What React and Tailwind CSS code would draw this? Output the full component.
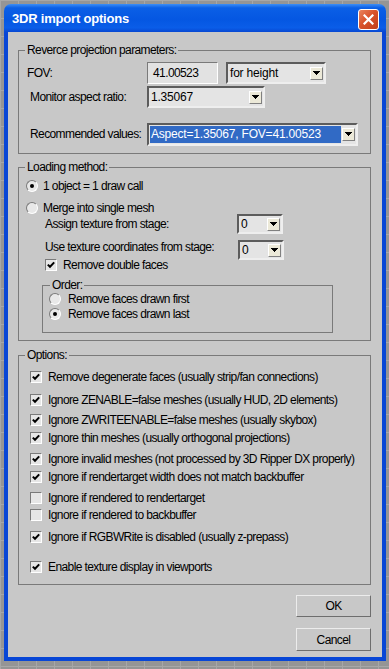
import React from 'react';

const lbl = "font-['Liberation_Sans',sans-serif] text-[12px] tracking-[-0.6px] leading-[14px] text-black whitespace-nowrap";

function Arrow() {
  return (
    <div className="w-[13px] h-[13px] shrink-0 flex items-center justify-center bg-[#ece9d8] border border-t-white border-l-white border-b-[#808080] border-r-[#808080]">
      <svg width="7" height="4" viewBox="0 0 7 4" shapeRendering="crispEdges">
        <path d="M0 0h7v1h-1v1h-1v1h-1v1h-1v-1h-1v-1h-1v-1h-1z" fill="#000" />
      </svg>
    </div>
  );
}

function Combo({ box, value, selected }) {
  return (
    <div className={`${box} shrink-0 flex items-center bg-[#e4e4e4] border-2 border-t-[#5c5c5c] border-l-[#5c5c5c] border-b-[#eeeeee] border-r-[#eeeeee] pr-[1px]`}>
      <div className={`flex-1 self-stretch m-[1px] mr-[1px] flex items-center pl-[1px] ${selected ? 'bg-[#316ac5] text-white' : 'text-black'}`}>
        <span className="font-['Liberation_Sans',sans-serif] text-[12px] tracking-[-0.2px] leading-none whitespace-nowrap">{value}</span>
      </div>
      <Arrow />
    </div>
  );
}

function Check({ checked }) {
  return (
    <div className="w-[12px] h-[12px] shrink-0 flex items-center justify-center bg-[#e6e6e6] border border-t-[#7a7a7a] border-l-[#7a7a7a] border-b-white border-r-white">
      {checked && (
        <svg width="8" height="8" viewBox="0 0 8 8">
          <path d="M0.8 3.6 L3 5.8 L7.2 1.4" stroke="#000" strokeWidth="2" fill="none" />
        </svg>
      )}
    </div>
  );
}

function Radio({ checked }) {
  return (
    <div className="w-[12px] h-[12px] shrink-0 rounded-full flex items-center justify-center bg-[#e8e8e8] border border-t-[#7a7a7a] border-l-[#7a7a7a] border-b-white border-r-white">
      {checked && <div className="w-[4px] h-[4px] rounded-full bg-black" />}
    </div>
  );
}

function CheckRow({ checked, text, mt }) {
  return (
    <div className={`flex items-center h-[12px] ml-[11px] ${mt}`}>
      <Check checked={checked} />
      <span className={`${lbl} ml-[6px]`}>{text}</span>
    </div>
  );
}

function Legend({ children, ml = 'ml-[6px]' }) {
  return <legend className={`${lbl} ${ml} px-[2px]`}>{children}</legend>;
}

export default function App() {
  return (
    <div className="w-[389px] h-[669px] overflow-hidden pt-[4px] pl-[4px] bg-[#959595] bg-[linear-gradient(#a7a7a7_1px,transparent_1px),linear-gradient(90deg,#a7a7a7_1px,transparent_1px)] bg-[length:18px_18px]">
      <div className="w-[382px] rounded-t-[7px] overflow-hidden">
        {/* title bar */}
        <div className="h-[28px] flex items-start bg-[linear-gradient(to_bottom,#3d8ef5_0%,#0b5fe6_14%,#0557e2_55%,#0a5de8_85%,#0848d2_100%)]">
          <span className="pt-[7px] pl-[8px] font-['Liberation_Sans',sans-serif] font-bold text-[13px] tracking-[-0.2px] leading-[15px] text-white">
            3DR import options
          </span>
          <div className="ml-auto mr-[7px] mt-[5px] w-[21px] h-[21px] rounded-[3px] border border-white flex items-center justify-center bg-[linear-gradient(135deg,#e9845e_0%,#d9532c_45%,#c0401c_100%)]">
            <svg width="11" height="11" viewBox="0 0 11 11">
              <path d="M1.5 1.5 L9.5 9.5 M9.5 1.5 L1.5 9.5" stroke="#fff" strokeWidth="2.2" strokeLinecap="square" />
            </svg>
          </div>
        </div>

        {/* client */}
        <div className="bg-[#c8c8c8] border-x-4 border-b-4 border-[#0846d6] pl-[10px] pt-[11px] pb-[6px]">
          {/* group 1 */}
          <fieldset className="w-[353px] border border-[#7a7a7a] pb-[8px]">
            <Legend>Reverce projection parameters:</Legend>
            <div className="flex items-center h-[22px] mt-[5px]">
              <span className={`${lbl} ml-[8px] w-[120px]`}>FOV:</span>
              <div className="w-[71px] h-[22px] flex items-center bg-[#e2e2e2] border border-t-[#7a7a7a] border-l-[#7a7a7a] border-b-white border-r-white">
                <span className={`${lbl} pl-[5px]`}>41.00523</span>
              </div>
              <Combo box="ml-[8px] w-[100px] h-[22px]" value="for height" />
            </div>
            <div className="flex items-center h-[22px] mt-[2px]">
              <span className={`${lbl} ml-[11px] w-[117px]`}>Monitor aspect ratio:</span>
              <Combo box="w-[118px] h-[22px]" value="1.35067" />
            </div>
            <div className="flex items-center h-[22px] mt-[15px]">
              <span className={`${lbl} ml-[11px] w-[117px]`}>Recommended values:</span>
              <Combo box="w-[211px] h-[23px]" value="Aspect=1.35067, FOV=41.00523" selected />
            </div>
          </fieldset>

          {/* group 2 */}
          <fieldset className="w-[353px] border border-[#7a7a7a] mt-[6px] pb-[7px]">
            <Legend>Loading method:</Legend>
            <div className="flex items-center h-[12px] mt-[6px] ml-[7px]">
              <Radio checked />
              <span className={`${lbl} ml-[5px]`}>1 object = 1 draw call</span>
            </div>
            <div className="flex items-center h-[12px] mt-[10px] ml-[7px]">
              <Radio />
              <span className={`${lbl} ml-[5px]`}>Merge into single mesh</span>
            </div>
            <div className="flex items-center h-[20px] ml-[26px]">
              <span className={`${lbl} w-[192px]`}>Assign texture from stage:</span>
              <Combo box="w-[46px] h-[20px]" value="0" />
            </div>
            <div className="flex items-start h-[18px] mt-[6px] ml-[26px]">
              <span className={`${lbl} w-[193px]`}>Use texture coordinates from stage:</span>
              <Combo box="w-[46px] h-[20px]" value="0" />
            </div>
            <div className="flex items-center h-[12px] mt-[1px] ml-[26px]">
              <Check checked />
              <span className={`${lbl} ml-[6px]`}>Remove double faces</span>
            </div>
            <fieldset className="ml-[23px] w-[291px] mt-[7px] border border-[#7a7a7a] pb-[12px]">
              <Legend ml="ml-[7px]">Order:</Legend>
              <div className="flex items-center h-[12px] mt-[1px] ml-[6px]">
                <Radio />
                <span className={`${lbl} ml-[7px]`}>Remove faces drawn first</span>
              </div>
              <div className="flex items-center h-[12px] mt-[3px] ml-[6px]">
                <Radio checked />
                <span className={`${lbl} ml-[7px]`}>Remove faces drawn last</span>
              </div>
            </fieldset>
          </fieldset>

          {/* group 3 */}
          <fieldset className="w-[353px] border border-[#7a7a7a] mt-[7px] pb-[11px]">
            <Legend>Options:</Legend>
            <CheckRow mt="mt-[9px]" checked text="Remove degenerate faces (usually strip/fan connections)" />
            <CheckRow mt="mt-[11px]" checked text="Ignore ZENABLE=false meshes (usually HUD, 2D elements)" />
            <CheckRow mt="mt-[8px]" checked text="Ignore ZWRITEENABLE=false meshes (usually skybox)" />
            <CheckRow mt="mt-[6px]" checked text="Ignore thin meshes (usually orthogonal projections)" />
            <CheckRow mt="mt-[9px]" checked text="Ignore invalid meshes (not processed by 3D Ripper DX properly)" />
            <CheckRow mt="mt-[6px]" checked text="Ignore if rendertarget width does not match backbuffer" />
            <CheckRow mt="mt-[9px]" text="Ignore if rendered to rendertarget" />
            <CheckRow mt="mt-[5px]" text="Ignore if rendered to backbuffer" />
            <CheckRow mt="mt-[10px]" checked text="Ignore if RGBWRite is disabled (usually z-prepass)" />
            <CheckRow mt="mt-[18px]" checked text="Enable texture display in viewports" />
          </fieldset>

          {/* buttons */}
          <div className="w-[353px] flex flex-col items-end mt-[10px]">
            <button className={`${lbl} w-[75px] h-[22px] border border-t-[#ececec] border-l-[#ececec] border-b-[#6e6e6e] border-r-[#6e6e6e]`}>
              OK
            </button>
            <button className={`${lbl} w-[75px] h-[23px] mt-[11px] border border-t-[#ececec] border-l-[#ececec] border-b-[#6e6e6e] border-r-[#6e6e6e]`}>
              Cancel
            </button>
          </div>
        </div>
      </div>
    </div>
  );
}
